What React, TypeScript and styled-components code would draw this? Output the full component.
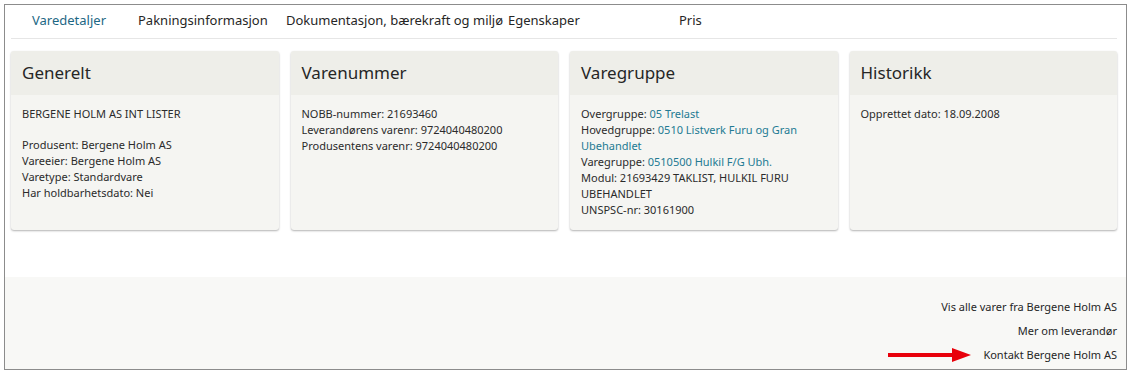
import styled, { createGlobalStyle } from "styled-components";

const GlobalStyle = createGlobalStyle`
  html, body {
    margin: 0;
    padding: 0;
    background: #ffffff;
  }
  body {
    font-family: "Noto Sans", "Open Sans", Arial, sans-serif;
    color: #2b2b2b;
  }
`;

type Part = { text: string; link?: boolean };
type Line = Part[] | null;

type CardData = {
  title: string;
  lines: Line[];
};

const cards: CardData[] = [
  {
    title: "Generelt",
    lines: [
      [{ text: "BERGENE HOLM AS INT LISTER" }],
      null,
      [{ text: "Produsent: Bergene Holm AS" }],
      [{ text: "Vareeier: Bergene Holm AS" }],
      [{ text: "Varetype: Standardvare" }],
      [{ text: "Har holdbarhetsdato: Nei" }],
    ],
  },
  {
    title: "Varenummer",
    lines: [
      [{ text: "NOBB-nummer: 21693460" }],
      [{ text: "Leverandørens varenr: 9724040480200" }],
      [{ text: "Produsentens varenr: 9724040480200" }],
    ],
  },
  {
    title: "Varegruppe",
    lines: [
      [{ text: "Overgruppe: " }, { text: "05 Trelast", link: true }],
      [
        { text: "Hovedgruppe: " },
        { text: "0510 Listverk Furu og Gran Ubehandlet", link: true },
      ],
      [{ text: "Varegruppe: " }, { text: "0510500 Hulkil F/G Ubh.", link: true }],
      [{ text: "Modul: 21693429 TAKLIST, HULKIL FURU UBEHANDLET" }],
      [{ text: "UNSPSC-nr: 30161900" }],
    ],
  },
  {
    title: "Historikk",
    lines: [[{ text: "Opprettet dato: 18.09.2008" }]],
  },
];

const tabs = [
  { label: "Varedetaljer", width: 106 },
  { label: "Pakningsinformasjon", width: 148 },
  { label: "Dokumentasjon, bærekraft og miljø", width: 222 },
  { label: "Egenskaper", width: 171 },
  { label: "Pris", width: 60 },
];

const Frame = styled.div`
  margin: 4px;
  border: 1px solid #8c8c8c;
  width: 1121px;
  height: 364px;
  display: flex;
  flex-direction: column;
  overflow: hidden;
`;

const Content = styled.div`
  padding: 0 9px 0 6px;
`;

const TabBar = styled.nav`
  display: flex;
  height: 33px;
  border-bottom: 1px solid #e6e6e6;
  padding-left: 21px;
`;

const Tab = styled.a<{ $active?: boolean; $width: number }>`
  width: ${(p) => p.$width}px;
  flex: none;
  font-size: 13px;
  line-height: 31px;
  color: ${(p) => (p.$active ? "#1d6784" : "#262626")};
  white-space: nowrap;
  cursor: pointer;
`;

const CardGrid = styled.div`
  display: grid;
  grid-template-columns: repeat(4, 1fr);
  gap: 12px;
  margin-top: 12px;
`;

const Card = styled.section`
  border-radius: 3px;
  background: #f5f5f2;
  box-shadow: 0 1px 2px rgba(0, 0, 0, 0.3);
  overflow: hidden;
  display: flex;
  flex-direction: column;
`;

const CardHeader = styled.h2`
  margin: 0;
  height: 44px;
  padding: 0 11px;
  background: #eeeee9;
  font-size: 17px;
  font-weight: 400;
  line-height: 44px;
  color: #262626;
`;

const CardBody = styled.div`
  padding: 11px 11px 12px;
  font-size: 11px;
  line-height: 16px;
  min-height: 111px;
`;

const Row = styled.div<{ $blank?: boolean }>`
  min-height: ${(p) => (p.$blank ? "15px" : "16px")};
`;

const Link = styled.a`
  color: #237a93;
  cursor: pointer;
`;

const Footer = styled.footer`
  margin-top: auto;
  height: 92px;
  background: #f8f8f6;
  padding: 22px 9px 0 0;
  box-sizing: border-box;
  display: flex;
  flex-direction: column;
  align-items: flex-end;
  gap: 8px;
`;

const FooterLink = styled.a`
  display: flex;
  align-items: center;
  gap: 12px;
  font-size: 11px;
  line-height: 16px;
  color: #262626;
  cursor: pointer;
`;

const Arrow = () => (
  <svg width="83" height="14" viewBox="0 0 83 14">
    <rect x="0" y="5" width="66" height="4" fill="#e8000b" />
    <polygon points="64,0 83,7 64,14" fill="#e8000b" />
  </svg>
);

export default function App() {
  return (
    <>
      <GlobalStyle />
      <Frame>
        <Content>
          <TabBar>
            {tabs.map((t, i) => (
              <Tab key={t.label} $active={i === 0} $width={t.width}>
                {t.label}
              </Tab>
            ))}
          </TabBar>
          <CardGrid>
            {cards.map((c) => (
              <Card key={c.title}>
                <CardHeader>{c.title}</CardHeader>
                <CardBody>
                  {c.lines.map((line, i) =>
                    line === null ? (
                      <Row key={i} $blank />
                    ) : (
                      <Row key={i}>
                        {line.map((p, j) =>
                          p.link ? (
                            <Link key={j}>{p.text}</Link>
                          ) : (
                            <span key={j}>{p.text}</span>
                          )
                        )}
                      </Row>
                    )
                  )}
                </CardBody>
              </Card>
            ))}
          </CardGrid>
        </Content>
        <Footer>
          <FooterLink>Vis alle varer fra Bergene Holm AS</FooterLink>
          <FooterLink>Mer om leverandør</FooterLink>
          <FooterLink>
            <Arrow />
            Kontakt Bergene Holm AS
          </FooterLink>
        </Footer>
      </Frame>
    </>
  );
}
